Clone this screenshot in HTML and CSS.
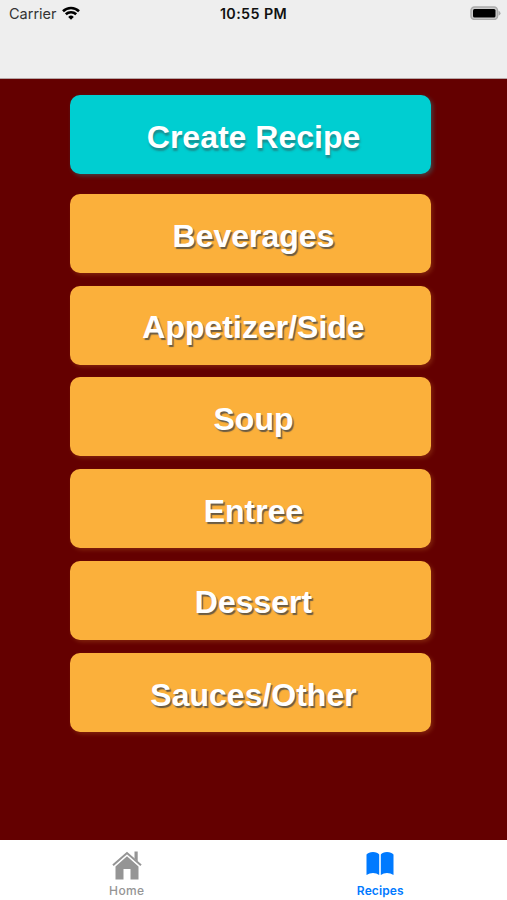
FILE: index.html
```
<!DOCTYPE html>
<html lang="en">
<head>
    <meta charset="UTF-8">
    <title>Recipes</title>
    <link rel="stylesheet" href="styles.css">
</head>
<body>
<div class="phone">
    <header class="top">
        <div class="status">
            <div class="carrier">
                <span>Carrier</span>
                <svg class="wifi" viewBox="0 0 18 14">
                    <path d="M1 5.2a11.6 11.6 0 0 1 16 0" />
                    <path d="M3.8 8.3a7.5 7.5 0 0 1 10.4 0" />
                    <path class="dot" d="M9 13.8l-2.8-2.9a4.1 4.1 0 0 1 5.6 0z" />
                </svg>
            </div>
            <span class="time">10:55 PM</span>
            <svg class="battery" viewBox="0 0 31 14">
                <rect class="shell" x="1" y="1" width="26.5" height="12.5" rx="3.5" />
                <rect x="3" y="3" width="22.5" height="8.5" rx="1.5" />
                <path class="cap" d="M28.5 4.7q2 .7 2 2.5t-2 2.5z" />
            </svg>
        </div>
    </header>
    <main class="content">
        <button class="btn create">Create Recipe</button>
        <button class="btn">Beverages</button>
        <button class="btn">Appetizer/Side</button>
        <button class="btn">Soup</button>
        <button class="btn">Entree</button>
        <button class="btn">Dessert</button>
        <button class="btn last">Sauces/Other</button>
    </main>
    <nav class="tabs">
        <a class="tab">
            <svg class="home" viewBox="0 0 30 29">
                <path d="M3.5 15.5L15 5.2l11.500 10.300v13h-8V18h-7v10.500h-8z" />
                <path d="M22.5 .5h3.200v10l-3.200-3z" />
                <path class="roof" d="M1 14.300L15 2l14 12.300" />
            </svg>
            <span>Home</span>
        </a>
        <a class="tab active">
            <svg class="book" viewBox="0 0 28 25">
                <path d="M.5 3.5Q2.500 1 7 1t6.200 2.500V24Q10.500 22 7 22T.5 24z" />
                <path d="M27.5 3.5Q25.500 1 21 1t-6.200 2.500V24Q17.500 22 21 22t6.500 2z" />
            </svg>
            <span>Recipes</span>
        </a>
    </nav>
</div>
</body>
</html>
```
FILE: styles.css
```
html,body{
    margin:0;
}
.phone{
    width: 507px;
    height: 900px;
    display:flex;
    flex-direction:column;
    overflow: hidden;
    background-color:#640000;
    font-family: Inter, "Liberation Sans", sans-serif;
}
.top{
    height: 79px;
    box-sizing:border-box;
    background-color:#eee;
    border-bottom:1px solid #b5a5a5;
}
.status{
    height: 26px;
    display:grid;
    grid-template-columns:1fr auto 1fr;
    align-items:center;
    padding:0 6px 0 9px;
    color:#111;
    font-size: 14.5px;
}
.carrier{
    display:flex;
    align-items:center;
    color:#333;
}
.wifi{
    width: 18px;
    height: 14px;
    margin: -1px 0 0 5px;
    fill:none;
    stroke:#000;
    stroke-width:2.6;
}
.wifi .dot{
    fill:#000;
    stroke:none;
}
.time{
    margin-left: -3px;
    font-weight:600;
    font-size: 14.3px;
    letter-spacing:0.4px;
}
.battery{
    width: 31px;
    height: 14px;
    justify-self:end;
}
.battery .shell{
    fill:#ccc;
    stroke:#aaa;
    stroke-width:1.5;
}
.battery .cap{
    fill:#aaa;
}
.content{
    flex:1;
    padding:16px 0 0 70px;
}
.btn{
    display:block;
    width: 361px;
    height: 79px;
    margin:0 0 12.7px;
    padding:5px 0 0 6px;
    border:0;
    border-radius:10px;
    background-color:#fbb03b;
    box-shadow:2px 2px 4px rgba(251,176,59,0.2);
    font:bold 32px "Liberation Sans", sans-serif;
    color:#fff;
    text-shadow:1.5px 1.5px 1px rgba(70,70,70,0.8);
}
.create{
    margin-bottom:20px;
    background-color:#00ced1;
    box-shadow:2px 2px 4px rgba(0,206,209,0.3);
    text-shadow:1px 3px 2px rgba(50,80,80,0.5);
}
.last{
    margin-top:13.5px;
}
.tabs{
    height: 60px;
    display:flex;
    background-color:#fff;
}
.tab{
    flex:1;
    display:flex;
    flex-direction:column;
    align-items:center;
    color:#959595;
    font-size: 12px;
    font-weight:500;
    letter-spacing:0.35px;
}
.tab svg{
    fill:currentColor;
}
.tab span{
    line-height: 16px;
    margin-top: 3px;
}
.home{
    width: 30px;
    height: 29px;
    margin-top: 11px;
}
.home .roof{
    fill:none;
    stroke:currentColor;
    stroke-width:2;
}
.book{
    width: 28px;
    height: 25px;
    margin: 11px 0 4px;
}
.active{
    color:#007aff;
    font-weight:600;
    letter-spacing:0.1px;
}
```
